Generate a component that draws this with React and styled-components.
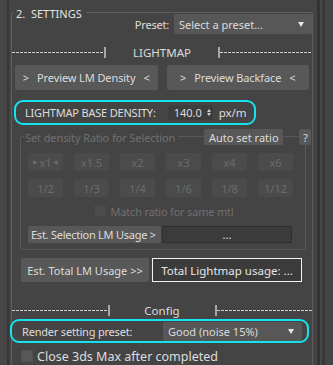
import React from 'react'
import styled, { createGlobalStyle } from 'styled-components'

const GlobalStyle = createGlobalStyle`
    html, body { margin: 0; padding: 0; background: #444444; }
    body {
        font-family: 'Noto Sans', 'Open Sans', sans-serif;
        font-size: 11px;
        color: #dcdcdc;
    }
    * { box-sizing: border-box; }
`

const Root = styled.div`
    display: flex;
    width: 333px;
    height: 365px;
    overflow: hidden;
    background: #444444;
`

const LeftEdge = styled.div`
    width: 9px;
    flex: none;
    background: #474747;
    border-right: 2px solid #363636;
`

const RightEdge = styled.div`
    width: 16px;
    flex: none;
    display: flex;
    background: #444444;
`

const Rail = styled.div`
    width: ${p => p.w}px;
    background: ${p => p.c};
`

const Main = styled.div`
    flex: 1;
    min-width: 0;
    padding: 0 4px 0 2px;
`

const Frame = styled.div`
    position: relative;
    margin-top: 12px;
    border: 1px solid #5e5e5e;
    border-bottom: none;
    border-radius: 3px 3px 0 0;
    height: 400px;
`

const FrameTitle = styled.div`
    position: absolute;
    top: -6px;
    left: 2px;
    padding: 0 4px 0 2px;
    background: #444444;
    line-height: 14px;
    color: #e4e4e4;
`

const PresetRow = styled.div`
    display: flex;
    justify-content: flex-end;
    align-items: center;
    gap: 5px;
    margin-top: 1px;
    height: 20px;
`

const Label = styled.span`
    color: ${p => (p.disabled ? '#707070' : '#dedede')};
    font-size: ${p => p.size || 11}px;
    letter-spacing: ${p => (p.size ? 0 : -0.2)}px;
    white-space: nowrap;
`

const Dropdown = styled.div`
    display: flex;
    flex: none;
    align-items: center;
    justify-content: space-between;
    width: ${p => p.w}px;
    height: ${p => p.h || 20}px;
    padding: 0 8px 0 5px;
    background: #575757;
    border-radius: 2px;
    color: #dcdcdc;
`

const Arrow = styled.span`
    width: 0;
    height: 0;
    border-left: 3.5px solid transparent;
    border-right: 3.5px solid transparent;
    border-top: 5px solid #e6e6e6;
`

const Separator = styled.div`
    display: flex;
    align-items: center;
    height: 11px;
    margin-top: ${p => p.mt}px;
`

const Dashes = styled.div`
    flex: 1;
    height: 1px;
    background: repeating-linear-gradient(90deg, #d0d0d0 0 3px, transparent 3px 4px);
`

const Bar = styled.div`
    width: 2px;
    height: 11px;
    background: #a8a8a8;
`

const SepLabel = styled.div`
    width: ${p => p.w}px;
    text-align: center;
    line-height: 11px;
    font-size: 11.5px;
    color: #dcdcdc;
`

const ButtonRow = styled.div`
    display: flex;
    gap: 9px;
    padding: 0 3px;
    margin-top: 7px;
`

const Button = styled.div`
    flex: ${p => (p.w ? 'none' : '1 1 0')};
    min-width: 0;
    width: ${p => (p.w ? `${p.w}px` : 'auto')};
    height: ${p => p.h || 25}px;
    display: flex;
    align-items: center;
    justify-content: ${p => (p.left ? 'flex-start' : 'center')};
    padding: 0 ${p => (p.left ? 3 : 0)}px;
    background: #585858;
    border-radius: 2px;
    color: #dcdcdc;
    font-size: 11px;
    letter-spacing: ${p => (p.left ? -0.25 : p.big ? -0.1 : 0)}px;
    white-space: nowrap;
    overflow: hidden;
`

const Chevron = styled.span`
    margin: ${p => (p.end ? '0 0 0 8px' : '0 8px 0 0')};
`

const Highlight = styled.div`
    display: flex;
    align-items: center;
    width: ${p => p.w}px;
    height: ${p => p.h}px;
    margin: ${p => p.m};
    padding: 0 ${p => p.pr || 0}px 0 ${p => p.pl}px;
    border: 2px solid #13e3ee;
    border-radius: 9px;
`

const Spinner = styled.div`
    display: flex;
    align-items: center;
    width: 45px;
    height: 15px;
    margin-left: 12px;
    padding-left: 6px;
    background: #3d3d3d;
    color: #dcdcdc;
`

const SpinArrows = styled.div`
    display: flex;
    flex-direction: column;
    gap: 1px;
    margin-left: auto;
    margin-right: 2px;
`

const TinyTri = styled.span`
    width: 0;
    height: 0;
    border-left: 2px solid transparent;
    border-right: 2px solid transparent;
    ${p => (p.up ? 'border-bottom: 3px solid #cfcfcf;' : 'border-top: 3px solid #cfcfcf;')}
`

const Group = styled.div`
    position: relative;
    margin: 11px 6px 0 8px;
    border: 1px solid #585858;
    border-radius: 2px;
    padding: 16px 6px 6px 7px;
`

const GroupHead = styled.div`
    position: absolute;
    top: -8px;
    left: 3px;
    right: 0;
    height: 16px;
    display: flex;
    align-items: center;
`

const GroupTitle = styled.span`
    padding: 0 3px 0 1px;
    background: #444444;
    color: #707070;
    letter-spacing: -0.1px;
    white-space: nowrap;
`

const SmallButton = styled.div`
    flex: none;
    height: 16px;
    width: ${p => p.w}px;
    margin-left: ${p => p.ml}px;
    display: flex;
    align-items: center;
    justify-content: center;
    background: #585858;
    border-radius: 2px;
    color: #dcdcdc;
    white-space: nowrap;
`

const RatioGrid = styled.div`
    display: grid;
    grid-template-columns: repeat(6, 35px);
    grid-auto-rows: 18px;
    column-gap: 11px;
    row-gap: 8px;
`

const RatioButton = styled.div`
    display: flex;
    align-items: center;
    justify-content: center;
    gap: 1px;
    background: #4b4b4b;
    border-radius: 2px;
    color: #6c6c6c;
`

const Mark = styled.span`
    font-size: 6px;
`

const CheckRow = styled.div`
    display: flex;
    align-items: center;
    justify-content: ${p => (p.center ? 'center' : 'flex-start')};
    gap: ${p => p.gap || 5}px;
    margin: ${p => p.m};
    height: 12px;
`

const Box = styled.span`
    width: 12px;
    height: 12px;
    flex: none;
    background: ${p => (p.disabled ? '#4b4b4b' : '#575757')};
    border: 1px solid ${p => (p.disabled ? '#474747' : '#515151')};
`

const EstRow = styled.div`
    display: flex;
    align-items: center;
    gap: ${p => p.gap}px;
    margin: ${p => p.m};
`

const Field = styled.div`
    flex: none;
    width: ${p => p.w}px;
    height: ${p => p.h}px;
    display: flex;
    align-items: center;
    justify-content: center;
    background: #3b3b3b;
    border: 1px solid ${p => (p.bright ? '#f2f2f2' : '#2f2f2f')};
    color: #e6e6e6;
    font-size: ${p => (p.bright ? 11.5 : 11)}px;
    white-space: nowrap;
`

function Sep({ label, w, mt }) {
    return (
        <Separator mt={mt}>
            <Dashes />
            <Bar />
            <SepLabel w={w}>{label}</SepLabel>
            <Bar />
            <Dashes />
        </Separator>
    )
}

const ratios = [
    ['x1', 'x1.5', 'x2', 'x3', 'x4', 'x6'],
    ['1/2', '1/3', '1/4', '1/6', '1/8', '1/12'],
]

function App() {
    return (
        <Root>
            <GlobalStyle />
            <LeftEdge />
            <Main>
                <Frame>
                    <FrameTitle>2.&nbsp; SETTINGS</FrameTitle>
                    <PresetRow>
                        <Label>Preset:</Label>
                        <Dropdown w={138}>
                            <span>Select a preset...</span>
                            <Arrow />
                        </Dropdown>
                    </PresetRow>

                    <Sep label="LIGHTMAP" w={112} mt={13} />

                    <ButtonRow>
                        <Button big>
                            <Chevron>&gt;</Chevron>Preview LM Density<Chevron end>&lt;</Chevron>
                        </Button>
                        <Button big>
                            <Chevron>&gt;</Chevron>Preview Backface<Chevron end>&lt;</Chevron>
                        </Button>
                    </ButtonRow>

                    <Highlight w={242} h={25} m="10px 0 0 2px" pl={9}>
                        <Label>LIGHTMAP BASE DENSITY:</Label>
                        <Spinner>
                            140.0
                            <SpinArrows>
                                <TinyTri up />
                                <TinyTri />
                            </SpinArrows>
                        </Spinner>
                        <Label size={11.5} style={{ marginLeft: 6 }}>px/m</Label>
                    </Highlight>

                    <Group>
                        <GroupHead>
                            <GroupTitle>Set density Ratio for Selection</GroupTitle>
                            <SmallButton w={79} ml={26}>Auto set ratio</SmallButton>
                            <SmallButton w={12} ml={16}>?</SmallButton>
                        </GroupHead>
                        <RatioGrid>
                            {ratios.flat().map(r => (
                                <RatioButton key={r}>
                                    {r === 'x1' && <Mark>▶</Mark>}
                                    {r}
                                    {r === 'x1' && <Mark>◀</Mark>}
                                </RatioButton>
                            ))}
                        </RatioGrid>
                        <CheckRow center m="8px 0 0 0">
                            <Box disabled />
                            <Label disabled>Match ratio for same mtl</Label>
                        </CheckRow>
                        <EstRow gap={1} m="9px 0 0 0">
                            <Button w={133} h={17} left>Est. Selection LM Usage &gt;</Button>
                            <Field w={130} h={17}>...</Field>
                        </EstRow>
                    </Group>

                    <EstRow gap={3} m="8px 0 0 9px">
                        <Button w={128} h={24}>Est. Total LM Usage &gt;&gt;</Button>
                        <Field w={150} h={24} bright>Total Lightmap usage: ...</Field>
                    </EstRow>

                    <Sep label="Config" w={105} mt={23} />

                    <Highlight w={299} h={24} m="3px 0 0 -2px" pl={10}>
                        <Label>Render setting preset:</Label>
                        <Dropdown w={139} h={19} style={{ marginLeft: 'auto', marginRight: 5 }}>
                            <span>Good (noise 15%)</span>
                            <Arrow />
                        </Dropdown>
                    </Highlight>

                    <CheckRow gap={4} m="7px 0 0 9px">
                        <Box />
                        <Label size={12.5}>Close 3ds Max after completed</Label>
                    </CheckRow>
                </Frame>
            </Main>
            <RightEdge>
                <Rail w={3} c="#333333" />
                <Rail w={2} c="#474747" />
                <Rail w={3} c="#383838" />
            </RightEdge>
        </Root>
    )
}

export default App
